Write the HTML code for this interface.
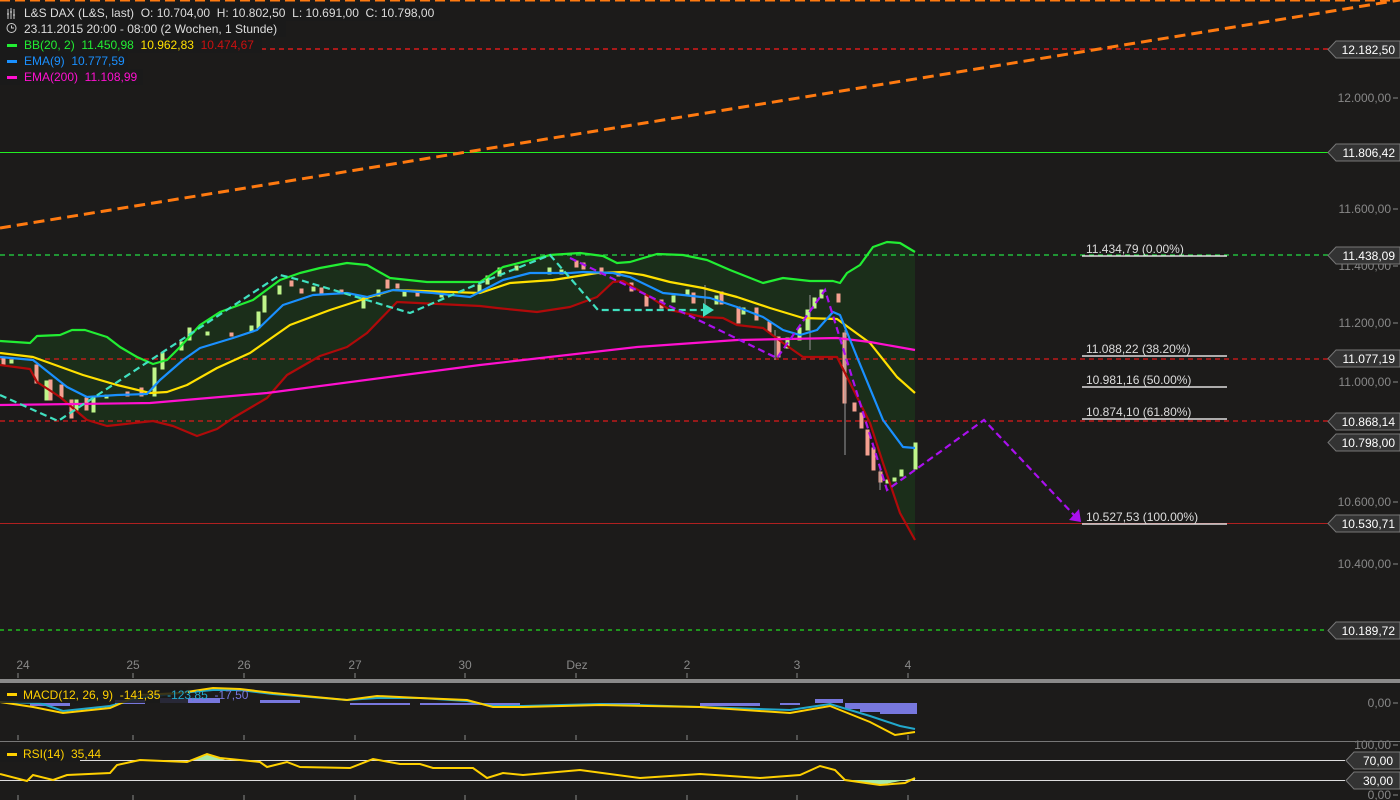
<!DOCTYPE html>
<html><head><meta charset="utf-8"><style>
html,body{margin:0;padding:0;background:#1c1b1a;overflow:hidden}
svg{display:block}
text{font-family:"Liberation Sans",sans-serif;font-size:12px;white-space:pre}
</style></head><body>
<svg width="1400" height="800" viewBox="0 0 1400 800" xmlns="http://www.w3.org/2000/svg" xml:space="preserve">
<rect width="1400" height="800" fill="#1c1b1a"/>
<line x1="0" y1="0.5" x2="1400" y2="0.5" stroke="#ff7a10" stroke-width="2" stroke-dasharray="10,5"/>
<path d="M0,341 L30,343 37,336 60,335 72,330 85,330 107,337 120,347 137,357 153,364 167,360 180,347 200,325 220,312 253,300 280,280 300,273 320,268 347,263 367,265 390,278 427,282 480,282 503,267 550,255 580,253 603,256 617,263 630,262 657,254 683,255 707,260 730,270 763,283 783,278 810,281 833,281 840,283 847,273 860,265 873,247 887,242 900,243 915,252 L915,540 900,513 883,463 870,423 847,377 837,357 803,357 783,343 763,328 737,325 723,318 703,317 670,310 650,297 623,281 613,282 597,297 570,307 537,312 497,308 470,305 480,306 397,302 367,333 347,347 320,356 287,375 267,398 233,418 217,429 197,436 173,426 153,421 107,426 87,420 60,397 37,382 30,369 0,365Z" fill="#1b2e1a"/>
<line x1="0" y1="49" x2="1330" y2="49" stroke="#ff1a1a" stroke-width="1.3" stroke-dasharray="5,4"/>
<line x1="0" y1="152.5" x2="1330" y2="152.5" stroke="#22ee22"/>
<line x1="0" y1="255" x2="1330" y2="255" stroke="#22dd44" stroke-width="1.3" stroke-dasharray="5,4"/>
<line x1="0" y1="359" x2="1330" y2="359" stroke="#dd1a1a" stroke-width="1.3" stroke-dasharray="5,4"/>
<line x1="0" y1="421" x2="1330" y2="421" stroke="#dd1a1a" stroke-width="1.3" stroke-dasharray="5,4"/>
<line x1="0" y1="523.5" x2="1330" y2="523.5" stroke="#b02020"/>
<line x1="0" y1="630" x2="1330" y2="630" stroke="#22dd22" stroke-width="1.3" stroke-dasharray="4,4"/>
<line x1="0" y1="228" x2="1400" y2="0" stroke="#ff7a10" stroke-width="3" stroke-dasharray="11,6"/>
<g stroke="#ddd" stroke-width="1.5">
<line x1="1082" y1="256" x2="1227" y2="256"/>
<line x1="1082" y1="356" x2="1227" y2="356"/>
<line x1="1082" y1="387" x2="1227" y2="387"/>
<line x1="1082" y1="419" x2="1227" y2="419"/>
<line x1="1082" y1="524" x2="1227" y2="524"/>
</g>
<g fill="#ddd">
<text x="1086" y="253">11.434,79 (0.00%)</text>
<text x="1086" y="353">11.088,22 (38.20%)</text>
<text x="1086" y="384">10.981,16 (50.00%)</text>
<text x="1086" y="416">10.874,10 (61.80%)</text>
<text x="1086" y="521">10.527,53 (100.00%)</text>
</g>
<g stroke-width="1">
<g fill="#f4a090" stroke="#f4a090">
<rect x="2" y="357" width="3" height="8"/><rect x="35" y="365" width="3" height="18"/><rect x="49" y="380" width="3" height="20"/><rect x="60" y="385" width="3" height="12"/><rect x="70" y="400" width="3" height="18"/><rect x="85" y="398" width="3" height="12"/><rect x="126" y="392" width="3" height="4"/><rect x="140" y="388" width="3" height="8"/>
<rect x="230" y="333" width="3" height="3"/><rect x="290" y="281" width="3" height="5"/><rect x="300" y="289" width="3" height="4"/><rect x="320" y="288" width="3" height="5"/><rect x="340" y="290" width="3" height="4"/><rect x="386" y="280" width="3" height="8"/><rect x="396" y="284" width="3" height="4"/><rect x="416" y="292" width="3" height="4"/>
<rect x="575" y="261" width="3" height="6"/><rect x="582" y="263" width="3" height="6"/><rect x="600" y="268" width="3" height="6"/><rect x="617" y="272" width="3" height="4"/><rect x="630" y="283" width="3" height="8"/><rect x="645" y="296" width="3" height="10"/><rect x="660" y="300" width="3" height="8"/><rect x="692" y="293" width="3" height="10"/><rect x="720" y="292" width="3" height="12"/><rect x="737" y="307" width="3" height="16"/><rect x="755" y="308" width="3" height="12"/><rect x="768" y="322" width="3" height="10"/><rect x="777" y="337" width="3" height="20"/><rect x="837" y="294" width="3" height="8"/><rect x="843" y="333" width="3" height="70"/><rect x="853" y="403" width="3" height="8"/><rect x="860" y="413" width="3" height="15"/><rect x="866" y="430" width="3" height="25"/><rect x="872" y="448" width="3" height="22"/><rect x="879" y="472" width="3" height="10"/>
</g>
<g fill="#bff58a" stroke="#bff58a">
<rect x="10" y="360" width="3" height="3"/><rect x="45" y="381" width="3" height="19"/><rect x="75" y="400" width="3" height="10"/><rect x="92" y="398" width="3" height="14"/><rect x="105" y="395" width="3" height="3"/><rect x="153" y="368" width="3" height="28"/><rect x="161" y="353" width="3" height="16"/><rect x="180" y="342" width="3" height="8"/><rect x="188" y="328" width="3" height="12"/><rect x="206" y="332" width="3" height="3"/><rect x="250" y="326" width="3" height="6"/><rect x="257" y="312" width="3" height="16"/><rect x="263" y="296" width="3" height="16"/><rect x="278" y="286" width="3" height="8"/><rect x="312" y="287" width="3" height="4"/><rect x="362" y="298" width="3" height="10"/><rect x="377" y="290" width="3" height="6"/><rect x="403" y="290" width="3" height="6"/><rect x="440" y="294" width="3" height="3"/><rect x="478" y="285" width="3" height="8"/><rect x="486" y="276" width="3" height="8"/><rect x="498" y="268" width="3" height="8"/><rect x="515" y="266" width="3" height="4"/><rect x="548" y="268" width="3" height="6"/><rect x="560" y="270" width="3" height="4"/><rect x="672" y="296" width="3" height="6"/><rect x="686" y="290" width="3" height="5"/><rect x="715" y="296" width="3" height="8"/><rect x="742" y="308" width="3" height="6"/><rect x="786" y="338" width="3" height="10"/><rect x="798" y="328" width="3" height="12"/><rect x="806" y="310" width="3" height="20"/><rect x="813" y="298" width="3" height="10"/><rect x="820" y="290" width="3" height="8"/><rect x="886" y="480" width="3" height="3"/><rect x="893" y="478" width="3" height="3"/><rect x="900" y="470" width="3" height="6"/><rect x="914" y="443" width="3" height="26"/>
</g>
<path d="M845,330V455M880,470V490M810,295V350M775,330V360M705,285V305" stroke="#999"/>
</g>
<g fill="none" stroke-width="2.2" stroke-linejoin="round">
<path d="M0,341 L30,343 37,336 60,335 72,330 85,330 107,337 120,347 137,357 153,364 167,360 180,347 200,325 220,312 253,300 280,280 300,273 320,268 347,263 367,265 390,278 427,282 480,282 503,267 550,255 580,253 603,256 617,263 630,262 657,254 683,255 707,260 730,270 763,283 783,278 810,281 833,281 840,283 847,273 860,265 873,247 887,242 900,243 915,252" stroke="#22ee33"/>
<path d="M0,365 L30,369 37,382 60,397 87,420 107,426 153,421 173,426 197,436 217,429 233,418 267,398 287,375 320,356 347,347 367,333 397,302 480,306 497,308 537,312 570,307 597,297 613,282 623,281 650,297 670,310 703,317 723,318 737,325 763,328 783,343 803,357 837,357 847,377 870,423 883,463 900,513 915,540" stroke="#b00a0a"/>
<path d="M0,353 L33,357 83,375 117,385 150,393 167,392 187,385 217,368 250,353 290,325 330,310 367,298 393,290 480,293 510,283 553,280 597,273 623,272 643,275 670,282 703,288 737,297 770,308 803,318 837,319 870,343 897,377 915,393" stroke="#ffe000"/>
<path d="M0,405 L150,403 267,393 480,365 637,347 737,340 837,338 870,342 915,350" stroke="#ff10d0"/>
<path d="M0,357 L33,360 67,387 87,397 117,395 147,394 160,380 183,360 200,348 233,338 257,330 283,305 313,295 347,293 367,297 393,290 433,293 470,297 503,280 530,273 570,273 583,272 613,273 630,277 663,293 683,295 710,298 737,307 763,317 783,330 800,335 817,330 833,312 840,315 857,357 883,420 903,447 915,448" stroke="#1a90ff"/>
</g>
<path d="M0,395 L58,421 280,275 300,280 410,313 480,283 550,255 598,310 703,310" fill="none" stroke="#40e0c0" stroke-width="2.2" stroke-dasharray="7,4"/>
<path d="M703,303 L714,310 703,317Z" fill="#40e0c0"/>
<path d="M570,258 L777,358 825,290 887,490 915,470 984,420 1074,515" fill="none" stroke="#aa10ee" stroke-width="2.2" stroke-dasharray="7,4"/>
<path d="M1069,520 L1081,522 1079,509Z" fill="#aa10ee"/>
<rect x="0" y="3" width="440" height="18" fill="#1a1a1a"/>
<rect x="0" y="20" width="286" height="17" fill="#1a1a1a"/>
<rect x="0" y="37" width="262" height="16" fill="#1a1a1a"/>
<rect x="0" y="53" width="128" height="16" fill="#1a1a1a"/>
<rect x="0" y="69" width="143" height="16" fill="#1a1a1a"/>
<g stroke="#ccc" fill="none"><path d="M8,9V19M11,8V19M14,9V19M7,14h2M10,12h2M13,15h2"/><circle cx="11.5" cy="28" r="4.5"/><path d="M11.5,25.5V28H14"/></g>
<text x="24" y="17" fill="#ddd">L&amp;S DAX (L&amp;S, last)  O: 10.704,00  H: 10.802,50  L: 10.691,00  C: 10.798,00</text>
<text x="24" y="33" fill="#ddd">23.11.2015 20:00 - 08:00 (2 Wochen, 1 Stunde)</text>
<rect x="7" y="44" width="10" height="3" fill="#22ee33"/><text x="24" y="49" fill="#22ee33">BB(20, 2)  11.450,98  <tspan fill="#ffe000">10.962,83</tspan>  <tspan fill="#cc1010">10.474,67</tspan></text>
<rect x="7" y="60" width="10" height="3" fill="#1a90ff"/><text x="24" y="65" fill="#1a90ff">EMA(9)  10.777,59</text>
<rect x="7" y="76" width="10" height="3" fill="#ff10d0"/><text x="24" y="81" fill="#ff10d0">EMA(200)  11.108,99</text>
<g fill="#888" text-anchor="end">
<text x="1391" y="50">12.200,00</text>
<text x="1391" y="102">12.000,00</text>
<text x="1391" y="213">11.600,00</text>
<text x="1391" y="270">11.400,00</text>
<text x="1391" y="327">11.200,00</text>
<text x="1391" y="386">11.000,00</text>
<text x="1391" y="506">10.600,00</text>
<text x="1391" y="568">10.400,00</text>
<text x="1391" y="707">0,00</text>
<text x="1391" y="749">100,00</text>
<text x="1391" y="799">0,00</text>
</g>
<g stroke="#888"><path d="M1393,98h5M1393,209h5M1393,266h5M1393,323h5M1393,382h5M1393,502h5M1393,564h5M1393,703h5M1393,745h5M1393,795h5"/></g>
<g font-size="12">
<g fill="#333" stroke="#777">
<path d="M1336,41h64v17h-64l-8,-8.5z"/><path d="M1336,144h64v17h-64l-8,-8.5z"/><path d="M1336,247h64v17h-64l-8,-8.5z"/><path d="M1336,350h64v17h-64l-8,-8.5z"/><path d="M1336,413h64v17h-64l-8,-8.5z"/><path d="M1336,434h64v17h-64l-8,-8.5z"/><path d="M1336,515h64v17h-64l-8,-8.5z"/><path d="M1336,622h64v17h-64l-8,-8.5z"/><path d="M1354,752h46v17h-46l-8,-8.5z"/><path d="M1354,772h46v17h-46l-8,-8.5z"/>
</g>
<g fill="#fff" text-anchor="end">
<text x="1395" y="54">12.182,50</text><text x="1395" y="157">11.806,42</text><text x="1395" y="260">11.438,09</text><text x="1395" y="363">11.077,19</text><text x="1395" y="426">10.868,14</text><text x="1395" y="447">10.798,00</text><text x="1395" y="528">10.530,71</text><text x="1395" y="635">10.189,72</text><text x="1393" y="765">70,00</text><text x="1393" y="785">30,00</text>
</g></g>
<g fill="#888" text-anchor="middle">
<text x="23" y="669">24</text><text x="133" y="669">25</text><text x="244" y="669">26</text><text x="355" y="669">27</text><text x="465" y="669">30</text><text x="577" y="669">Dez</text><text x="687" y="669">2</text><text x="797" y="669">3</text><text x="908" y="669">4</text>
</g>
<g stroke="#888"><path d="M18,673v5M133,673v5M244,673v5M355,673v5M465,673v5M576,673v5M687,673v5M797,673v5M908,673v5M18,735v5M133,735v5M244,735v5M355,735v5M465,735v5M576,735v5M687,735v5M797,735v5M908,735v5M18,795v5M133,795v5M244,795v5M355,795v5M465,795v5M576,795v5M687,795v5M797,795v5M908,795v5"/></g>
<rect x="0" y="679" width="1400" height="4" fill="#8a8a8a"/>
<line x1="0" y1="741.5" x2="1400" y2="741.5" stroke="#777"/>
<g fill="#7777dd">
<rect x="30" y="703" width="40" height="3"/><rect x="115" y="700" width="30" height="4"/><rect x="160" y="698" width="60" height="5"/><rect x="260" y="700" width="40" height="3"/><rect x="350" y="703" width="60" height="2"/><rect x="420" y="703" width="100" height="2"/><rect x="600" y="703" width="40" height="2"/><rect x="700" y="703" width="60" height="3"/><rect x="780" y="703" width="20" height="2"/><rect x="815" y="699" width="28" height="4"/><rect x="845" y="703" width="15" height="6"/><rect x="860" y="703" width="20" height="9"/><rect x="880" y="703" width="37" height="11"/>
</g>
<path d="M0,702 L40,703 63,711 110,706 140,698 180,693 213,690 240,690 273,694 347,700 377,698 420,698 467,701 493,706 523,706 600,704 700,707 790,710 830,704 870,716 900,726 915,729" fill="none" stroke="#22a8cc" stroke-width="2"/>
<path d="M0,702 L33,707 63,713 110,708 140,695 180,693 213,688 240,689 273,693 347,700 377,696 420,698 467,700 493,707 523,707 600,705 700,707 790,713 830,706 870,722 895,735 915,732" fill="none" stroke="#ffd000" stroke-width="2"/>
<rect x="0" y="687" width="188" height="16" fill="#1a1a1a" opacity=".85"/>
<rect x="7" y="693" width="10" height="3" fill="#ffd000"/>
<text x="23" y="699" fill="#ffd000">MACD(12, 26, 9)  -141,35  <tspan fill="#22a8cc">-123,85</tspan>  <tspan fill="#7777dd">-17,50</tspan></text>
<line x1="0" y1="760.5" x2="1345" y2="760.5" stroke="#ddd"/>
<line x1="0" y1="780.5" x2="1345" y2="780.5" stroke="#ddd"/>
<path d="M190,760 L207,754 220,758 225,760Z M845,780 L880,785 915,778 915,780Z" fill="#a8e8a8"/>
<path d="M0,774 L27,781 33,775 53,780 67,775 110,773 117,765 140,760 187,762 207,754 220,758 260,762 267,767 287,762 300,767 350,768 373,759 400,764 420,764 433,768 473,768 487,778 503,773 523,775 580,770 640,778 700,774 760,778 800,775 820,766 835,770 845,780 880,785 905,783 915,778" fill="none" stroke="#ffd000" stroke-width="2"/>
<rect x="0" y="746" width="80" height="16" fill="#1a1a1a"/>
<rect x="7" y="753" width="10" height="3" fill="#ffd000"/>
<text x="23" y="758" fill="#ffd000">RSI(14)  35,44</text>
</svg>
</body></html>
